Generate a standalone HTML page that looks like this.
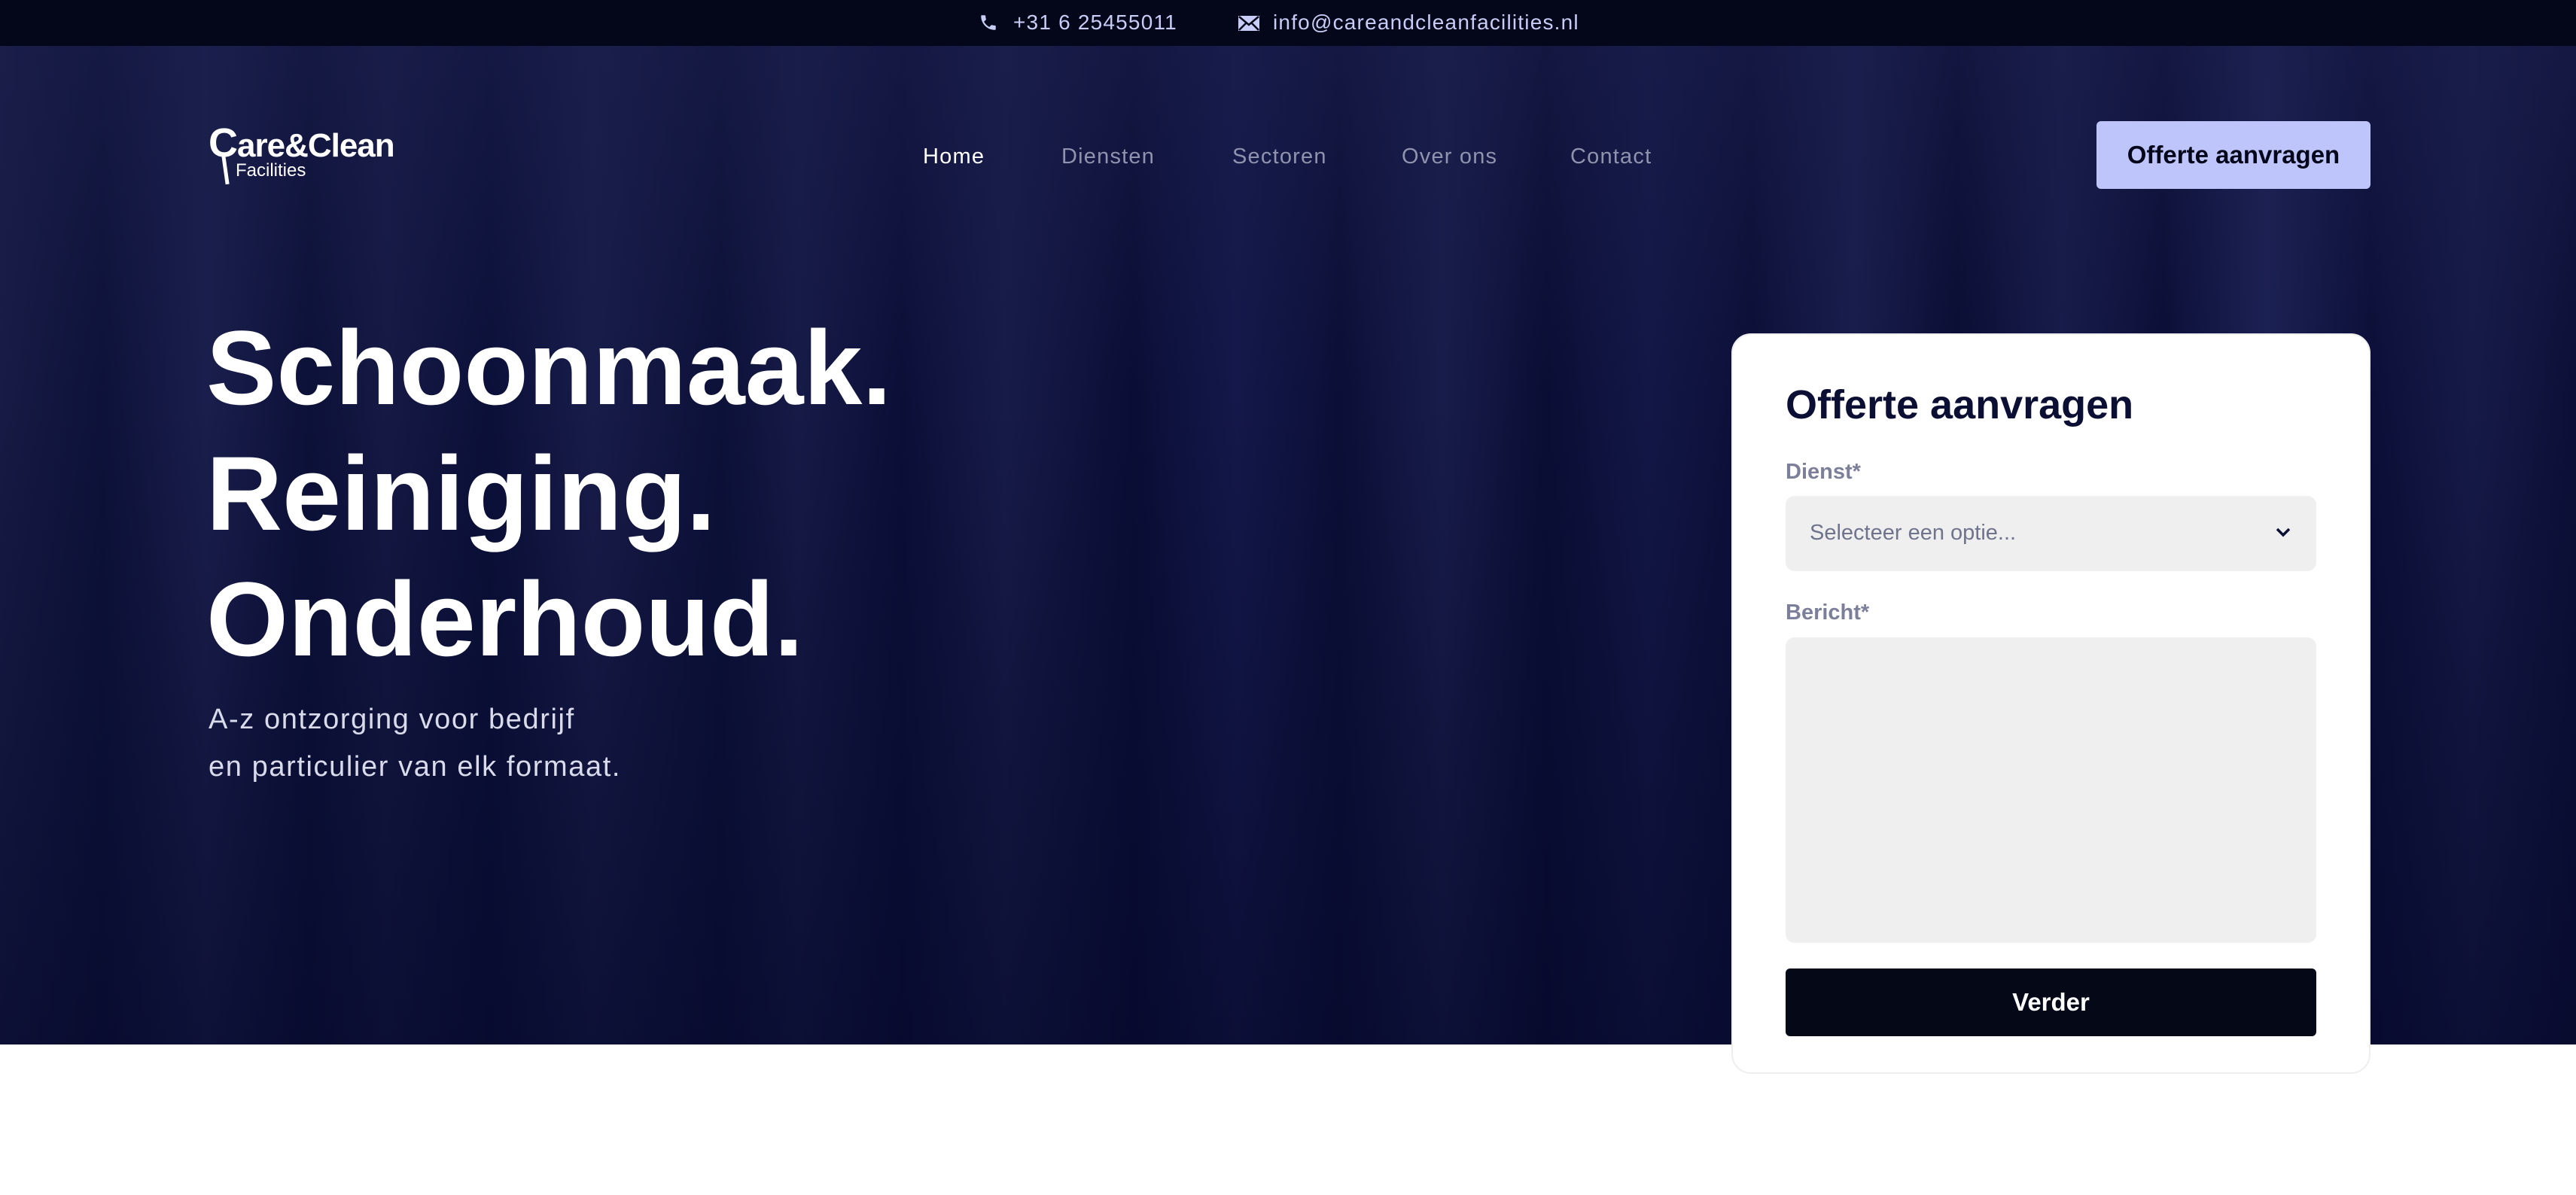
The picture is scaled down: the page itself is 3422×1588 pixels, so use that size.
<!DOCTYPE html>
<html><head><meta charset="utf-8"><style>
*{margin:0;padding:0;box-sizing:border-box}
body{width:3422px;height:1588px;background:#fff;font-family:"Liberation Sans",sans-serif;position:relative;overflow:hidden}
.top{position:absolute;left:0;top:0;width:3422px;height:61px;background:#04061a;color:#c8cdf7;font-size:28px;letter-spacing:1.2px}
.top span{position:absolute;top:14px}
.hero{position:absolute;left:0;top:61px;width:3422px;height:1327px;
background:
linear-gradient(180deg,rgba(28,32,76,0.5) 0%,rgba(10,14,50,0) 35%,rgba(4,7,38,0.55) 100%),
linear-gradient(90deg,#171b45 0%,#0d123a 4%,#1a1e4c 8%,#0c1139 12%,#151944 15%,#0b1039 19%,#181c49 23%,#0c1139 28%,#161a46 31%,#0b0f38 35%,#171b48 39%,#0a0e36 44%,#14184a 48%,#0b0f37 52%,#181c4a 56%,#0a0e35 60%,#131746 64%,#0b0f37 68%,#191d4c 72%,#090d33 76%,#171b49 80%,#0a0e36 84%,#1c2154 88%,#0b0f38 92%,#161a47 96%,#0c1038 100%);}
.logo{position:absolute;left:277px;top:165px;color:#fff}
.nav a{position:absolute;top:192px;font-size:29px;color:#8f93ad;text-decoration:none;letter-spacing:1.2px}
.btn{position:absolute;left:2785px;top:161px;width:364px;height:90px;background:#bec5fa;border-radius:6px;font-size:33px;color:#04061a;text-align:center;line-height:90px;font-weight:bold}
h1{position:absolute;left:274px;top:405px;color:#fff;font-size:140px;line-height:167px;font-weight:bold}
.sub{position:absolute;left:277px;top:925px;color:#d9dbea;font-size:38px;line-height:63px;letter-spacing:1.6px}
.card{position:absolute;left:2300px;top:443px;width:849px;height:984px;background:#fff;border-radius:26px;border:2px solid #eee}
.card h2{position:absolute;left:70px;top:62px;font-size:54px;color:#0b0f33;font-weight:bold}
.lbl{position:absolute;left:70px;font-size:29px;color:#7b7f99;font-weight:bold}
.fld{position:absolute;left:70px;width:705px;background:#efefef;border-radius:12px}
.go{position:absolute;left:70px;top:842px;width:705px;height:90px;background:#050817;border-radius:6px;color:#fff;font-size:33px;font-weight:bold;text-align:center;line-height:90px}
</style></head><body>
<div class="top">
<svg style="position:absolute;left:1300px;top:16px" width="26" height="28" viewBox="0 0 24 24"><path fill="#c8cdf7" d="M6.6 10.8c1.4 2.8 3.8 5.1 6.6 6.6l2.2-2.2c.3-.3.7-.4 1-.2 1.1.4 2.3.6 3.6.6.6 0 1 .4 1 1V20c0 .6-.4 1-1 1C10.6 21 3 13.4 3 4c0-.6.4-1 1-1h3.5c.6 0 1 .4 1 1 0 1.3.2 2.5.6 3.6.1.3 0 .7-.2 1L6.6 10.8z"/></svg>
<span style="left:1346px">+31 6 25455011</span>
<svg style="position:absolute;left:1645px;top:21px" width="28" height="20" viewBox="0 0 28 20"><rect width="28" height="20" fill="#c8cdf7"/><path d="M1 1l13 11L27 1M1 19l9-9M27 19l-9-9" stroke="#04061a" stroke-width="2.5" fill="none"/></svg>
<span style="left:1691px">info@careandcleanfacilities.nl</span>
</div>
<div class="hero"></div>
<div class="logo">
<div style="font-size:44px;font-weight:bold;line-height:50px;letter-spacing:-1px"><span style="font-size:54px">C</span>are&amp;Clean</div>
<div style="font-size:24px;margin-left:36px;margin-top:-6px">Facilities</div>
<div style="position:absolute;left:20px;top:42px;width:5px;height:38px;background:#fff;transform:rotate(-8deg)"></div>
</div>
<div class="nav">
<a style="left:1226px;color:#fff">Home</a>
<a style="left:1410px">Diensten</a>
<a style="left:1637px">Sectoren</a>
<a style="left:1862px">Over ons</a>
<a style="left:2086px">Contact</a>
</div>
<div class="btn">Offerte aanvragen</div>
<h1>Schoonmaak.<br>Reiniging.<br>Onderhoud.</h1>
<div class="sub">A-z ontzorging voor bedrijf<br>en particulier van elk formaat.</div>
<div class="card">
<h2>Offerte aanvragen</h2>
<div class="lbl" style="top:166px">Dienst*</div>
<div class="fld" style="top:214px;height:100px"><span style="position:absolute;left:32px;top:33px;font-size:29px;color:#6f738c">Selecteer een optie...</span>
<svg style="position:absolute;left:650px;top:40px" width="22" height="16" viewBox="0 0 22 16"><path d="M3 4l8 8 8-8" stroke="#0b0f33" stroke-width="3.5" fill="none"/></svg></div>
<div class="lbl" style="top:353px">Bericht*</div>
<div class="fld" style="top:402px;height:406px"></div>
<div class="go">Verder</div>
</div>
</body></html>
